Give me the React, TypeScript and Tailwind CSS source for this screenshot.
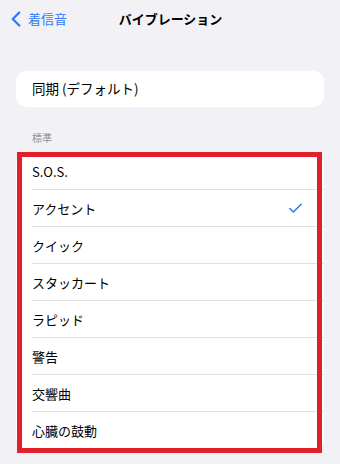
import { ChevronLeft, Check } from "lucide-react";

const patterns = [
  "S.O.S.",
  "アクセント",
  "クイック",
  "スタッカート",
  "ラピッド",
  "警告",
  "交響曲",
  "心臓の鼓動",
];

const selected = "アクセント";

export default function App() {
  return (
    <div
      className="w-[340px] h-[464px] bg-[#f1f1f6] text-black overflow-hidden"
      style={{ fontFamily: '"Noto Sans CJK JP", "Noto Sans", sans-serif' }}
    >
      {/* NAV BAR */}
      <div className="relative h-[37px] flex items-center">
        <button className="flex items-center pl-[3px] text-[#3478f6]">
          <ChevronLeft size={26} strokeWidth={2.2} />
          <span className="text-[13px] ml-[-1px] leading-none">着信音</span>
        </button>
        <div className="absolute left-0 right-0 top-0 h-full flex items-center justify-center pointer-events-none">
          <span className="text-[13px] font-bold leading-none pl-[1px]">バイブレーション</span>
        </div>
      </div>

      {/* SYNC */}
      <div className="mx-4 mt-[34px] bg-white rounded-[10px] h-[36px] flex items-center pl-4">
        <span className="text-[13.5px] leading-none">同期 (デフォルト)</span>
      </div>

      {/* STANDARD */}
      <div className="mt-[26px] pl-8 text-[10px] text-[#8e8e93] leading-none h-[13px]">標準</div>

      <div className="relative mx-4 mt-[7px]">
        <div className="bg-white rounded-[10px] overflow-hidden">
          {patterns.map((p, i) => (
            <div key={p} className="pl-4">
              <div
                className={`h-[37px] flex items-center pr-5 ${
                  i < patterns.length - 1 ? "border-b border-[#e0e0e4]" : ""
                }`}
              >
                <span className="text-[13px] leading-none flex-1">{p}</span>
                {p === selected && (
                  <Check size={17} strokeWidth={2.2} className="text-[#3478f6]" />
                )}
              </div>
            </div>
          ))}
        </div>
        {/* highlight annotation */}
        <div className="absolute left-[1px] right-[2px] -top-[1px] -bottom-[4px] border-[5px] border-[#e3202a] pointer-events-none" />
      </div>
    </div>
  );
}
